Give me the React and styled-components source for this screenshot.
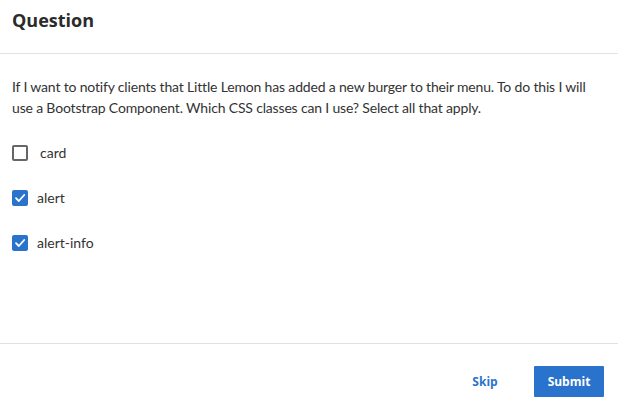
import { useState } from "react";
import styled, { createGlobalStyle } from "styled-components";

const GlobalStyle = createGlobalStyle`
  html, body {
    margin: 0;
    padding: 0;
    background: #fff;
  }
  * { box-sizing: border-box; }
`;

const options = [
  { label: "card", checked: false, indent: 3 },
  { label: "alert", checked: true, indent: 0 },
  { label: "alert-info", checked: true, indent: 0 },
];

function App() {
  const [values, setValues] = useState(options.map((o) => o.checked));

  const toggle = (i) => {
    setValues((old) => old.map((v, j) => (j === i ? !v : v)));
  };

  return (
    <Wrapper>
      <GlobalStyle />
      <Header>
        <Title>Question</Title>
      </Header>
      <Content>
        <Prompt>
          If I want to notify clients that Little Lemon has added a new burger to
          their menu. To do this I will use a Bootstrap Component. Which CSS
          classes can I use? Select all that apply.
        </Prompt>
        <Options>
          {options.map((item, i) => (
            <Option key={item.label} onClick={() => toggle(i)}>
              <Box $checked={values[i]}>
                {values[i] && (
                  <svg width="12" height="12" viewBox="0 0 12 12">
                    <path
                      d="M2 6.2 L4.8 9 L10.2 3"
                      fill="none"
                      stroke="#fff"
                      strokeWidth="1.8"
                      strokeLinecap="round"
                      strokeLinejoin="round"
                    />
                  </svg>
                )}
              </Box>
              <Label $indent={item.indent}>{item.label}</Label>
            </Option>
          ))}
        </Options>
      </Content>
      <Footer>
        <SkipButton>Skip</SkipButton>
        <SubmitButton>Submit</SubmitButton>
      </Footer>
    </Wrapper>
  );
}

const Wrapper = styled.div`
  display: flex;
  flex-direction: column;
  width: 618px;
  height: 414px;
  font-family: "Source Sans Pro", Lato, "Liberation Sans", sans-serif;
  color: #333;
`;
const Header = styled.div`
  display: flex;
  align-items: center;
  height: 54px;
  padding: 0 12px;
  border-bottom: 1px solid #e1e1e1;
`;
const Title = styled.h2`
  margin: 0 0 13px;
  font-family: "Open Sans", "Noto Sans", sans-serif;
  font-size: 18px;
  font-weight: 700;
  color: #2b2b2b;
`;
const Content = styled.div`
  flex: 1;
  padding: 22px 12px 0;
  border-bottom: 1px solid #e1e1e1;
`;
const Prompt = styled.p`
  margin: 0;
  font-size: 14px;
  line-height: 21px;
  letter-spacing: -0.17px;
  color: #333;
`;
const Options = styled.div`
  display: flex;
  flex-direction: column;
  margin-top: 12px;
`;
const Option = styled.label`
  display: flex;
  align-items: center;
  height: 45px;
  cursor: pointer;
`;
const Box = styled.span`
  display: flex;
  align-items: center;
  justify-content: center;
  width: 16px;
  height: 16px;
  border-radius: 2px;
  border: 2px solid ${(p) => (p.$checked ? "#2a73cc" : "#666")};
  background: ${(p) => (p.$checked ? "#2a73cc" : "#fff")};
`;
const Label = styled.span`
  margin-left: ${(p) => 9 + p.$indent}px;
  font-size: 14px;
  color: #333;
`;
const Footer = styled.div`
  display: flex;
  justify-content: flex-end;
  align-items: flex-start;
  gap: 14px;
  height: 70px;
  padding: 22px 14px 0;
`;
const SkipButton = styled.button`
  width: 70px;
  height: 31px;
  border: none;
  background: transparent;
  color: #2a73cc;
  font-family: "Open Sans", "Noto Sans", sans-serif;
  font-size: 12px;
  font-weight: 700;
  cursor: pointer;
`;
const SubmitButton = styled.button`
  width: 70px;
  height: 31px;
  border: none;
  border-radius: 1px;
  background: #2a73cc;
  color: #fff;
  font-family: "Open Sans", "Noto Sans", sans-serif;
  font-size: 12px;
  font-weight: 700;
  cursor: pointer;
`;

export default App;
